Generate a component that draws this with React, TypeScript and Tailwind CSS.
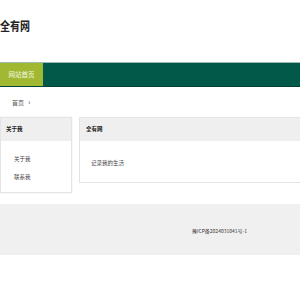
const font = { fontFamily: '"Noto Sans CJK SC", "Liberation Sans", sans-serif' };

export default function App() {
  return (
    <div className="w-[300px] h-[300px] overflow-hidden bg-white text-[#333]" style={font}>
      <div className="h-[62px] pt-[19px]">
        <h1 className="text-[10px] font-bold leading-[14px] text-[#222] scale-y-125 origin-left">全有网</h1>
      </div>
      <div className="h-[25px] bg-[#02594a] border-t border-[#9cbcb3] border-b border-b-[#014236] flex">
        <a className="w-[43px] h-full bg-[#a1b932] text-[#f4f7e4] text-[6.5px] flex items-center justify-center">
          网站首页
        </a>
      </div>
      <div className="h-[30px] pl-[12px] flex items-center text-[6px] text-[#555]">
        首页 <span className="ml-[4px] text-[8px]">›</span>
      </div>
      <div className="flex gap-[7px] items-start">
        <div className="w-[72px] h-[76px] border border-[#e4e4e4] shadow-[0_0_1px_#ddd]">
          <div className="h-[23px] bg-[#efefef] flex items-center pl-[5px] text-[5.5px] font-bold text-[#222]">关于我</div>
          <ul className="pl-[13px] pt-[14px] text-[5.5px] text-[#444] leading-[8px]">
            <li className="mb-[10px]">关于我</li>
            <li>联系我</li>
          </ul>
        </div>
        <div className="flex-1 h-[66px] border border-r-0 border-[#e4e4e4]">
          <div className="h-[23px] bg-[#efefef] flex items-center pl-[6px] text-[5.5px] font-bold text-[#222]">全有网</div>
          <p className="pl-[11px] pt-[18px] text-[5.5px] text-[#444] leading-[8px]">记录我的生活</p>
        </div>
      </div>
      <div className="mt-[11px] h-[51px] bg-[#f0f0f0] flex items-center pl-[192px] pt-[3px] text-[5px] text-[#333]">
        豫ICP备2024031041号-1
      </div>
    </div>
  );
}
